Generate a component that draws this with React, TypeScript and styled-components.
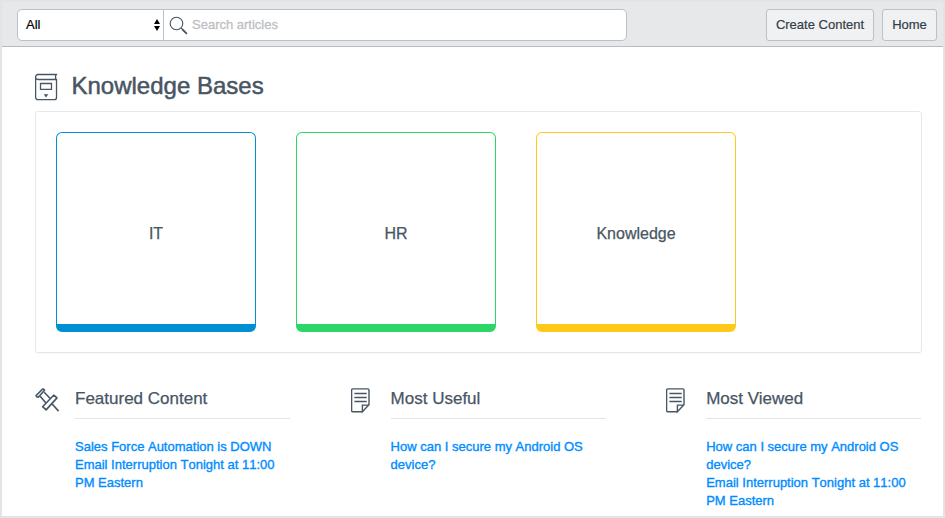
import React from 'react';
import styled, { createGlobalStyle } from 'styled-components';

const GlobalStyle = createGlobalStyle`
  * { box-sizing: border-box; }
  body {
    margin: 0;
    background: #fff;
    color: #485563;
    font-family: "Liberation Sans", Arial, sans-serif;
    -webkit-font-smoothing: antialiased;
  }
`;

const Page = styled.div`
  height: 518px;
  overflow: hidden;
  border: 2px solid #e4e4e4;
  background: #fff;
`;

const Toolbar = styled.header`
  display: flex;
  align-items: flex-start;
  height: 45px;
  padding: 7px 6px 0 15px;
  background: #e6e8ea;
  border-bottom: 1px solid #b8bcc2;
`;

const SearchGroup = styled.div`
  display: flex;
  width: 610px;
  height: 32px;
  margin-right: auto;
  background: #fff;
  border: 1px solid #bdc0c4;
  border-radius: 5px;
  overflow: hidden;
`;

const Scope = styled.div`
  display: flex;
  align-items: center;
  justify-content: space-between;
  width: 146px;
  padding: 0 2px 1px 8px;
  border-right: 1px solid #bdc0c4;
  color: #000;
  font-size: 13px;
  line-height: 28px;
  -webkit-text-stroke: 0.2px #000;
`;

const SearchField = styled.label`
  display: flex;
  flex: 1;
  align-items: center;
  padding: 0 8px 1px 5px;
`;

const SearchInput = styled.input`
  flex: 1;
  height: 28px;
  margin-left: 3px;
  padding: 0;
  border: 0;
  outline: 0;
  background: transparent;
  font: 13px "Liberation Sans", Arial, sans-serif;
  &::placeholder {
    color: #bdc0c4;
    opacity: 1;
    -webkit-text-stroke: 0.3px #bdc0c4;
  }
`;

const ToolButton = styled.button<{ $width: number }>`
  width: ${(p) => p.$width}px;
  height: 32px;
  margin-left: 8px;
  padding: 0 0 1px;
  border: 1px solid #bdc0c4;
  border-radius: 3px;
  background: #f0f1f3;
  color: #343d47;
  font: 13px "Liberation Sans", Arial, sans-serif;
  white-space: nowrap;
  -webkit-text-stroke: 0.2px #343d47;
`;

const Content = styled.main`
  padding: 0 21px 0 33px;
`;

const TitleRow = styled.div`
  display: flex;
  height: 64px;
  padding-top: 25px;
`;

const Title = styled.h1`
  margin: 0 0 0 13.5px;
  font-size: 24px;
  font-weight: 400;
  line-height: 28px;
  -webkit-text-stroke: 0.5px #485563;
`;

const Shelf = styled.section`
  display: flex;
  gap: 40px;
  height: 242px;
  padding: 20px;
  border: 1px solid #e6e8ea;
  border-radius: 3px;
  box-shadow: 0 1px 1px rgba(0, 0, 0, 0.03);
`;

const BaseCard = styled.a<{ $color: string }>`
  display: flex;
  align-items: center;
  justify-content: center;
  width: 200px;
  height: 200px;
  padding-top: 11px;
  border: 1px solid ${(p) => p.$color};
  border-bottom-width: 8px;
  border-radius: 6px;
  font-size: 16px;
  -webkit-text-stroke: 0.25px #485563;
`;

const Lists = styled.div`
  display: grid;
  grid-template-columns: repeat(3, 255px);
  column-gap: 60.6px;
  padding-top: 35px;
`;

const List = styled.section`
  display: flex;
  align-items: flex-start;
`;

const ListIcon = styled.div`
  width: 40px;
  flex: none;
  svg { display: block; }
`;

const ListBody = styled.div`
  width: 215px;
`;

const ListTitle = styled.h2`
  height: 31px;
  margin: 0 0 19px;
  border-bottom: 1px solid #e4e4e4;
  font-size: 17px;
  font-weight: 400;
  line-height: 21px;
  -webkit-text-stroke: 0.25px #485563;
`;

const ArticleLink = styled.a`
  display: block;
  color: #008cff;
  font-size: 13px;
  line-height: 18px;
  font-kerning: none;
  -webkit-text-stroke: 0.35px #008cff;
`;

const Sorter = () => (
  <svg width="8" height="12" viewBox="0 0 8 12" fill="#000">
    <path d="M4 0 7 5H1ZM1 7H7L4 12Z" />
  </svg>
);

const Magnifier = () => (
  <svg width="20" height="20" viewBox="0 0 20 20" fill="none" stroke="#485563">
    <circle cx="7.5" cy="8.5" r="6.3" strokeWidth="1.1" />
    <path d="m12 13 1.3 1.3" />
    <path d="m13 14 4.9 4.9" strokeWidth="1.8" />
  </svg>
);

const Book = () => (
  <svg width="23" height="29" viewBox="0 0 23 29" fill="none" stroke="#485563" strokeWidth="1.3">
    <path d="M22.2 2.5H3.1a2.4 2.4 0 0 0 0 5H21.5V25.5a2.2 2.2 0 0 1-2.2 2.2H2.8A2.2 2.2 0 0 1 .6 25.5V5M20.6 2.5v5" />
    <path d="M5.5 11.5h11v5.8h-11z" />
    <path d="M8.7 22.2h4.6L11 25.5Z" fill="#485563" stroke="none" />
  </svg>
);

const Pin = () => (
  <svg width="26" height="26" viewBox="0 0.5 26 26" fill="none" stroke="#485563" strokeWidth="1.6" strokeLinejoin="round">
    <path d="M7.6 1.6Q8.9 1.2 9.6 2.8L3.3 9.8Q1 9.4 1.1 8Z" />
    <path d="M9.2 4.8 15.2 11M5.2 8.8 10.7 15.2" />
    <path d="M18.7 7.7 22 10.4 11.1 22.4 7.6 19.2ZM16.9 16.2 23.6 23.6" />
  </svg>
);

const Note = () => (
  <svg width="20" height="26" viewBox="0.3 0.7 20 26" fill="none" stroke="#485563" strokeWidth="1.4">
    <path d="M11.7 24.4H2.2A1.3 1.3 0 0 1 .9 23.1V2.9a1.3 1.3 0 0 1 1.3-1.3H17a1.3 1.3 0 0 1 1.3 1.3V17.5L11.7 24.4V17.8H18" />
    <path d="M3.7 6.2H16M3.7 10.2H16M3.7 14.2H16" />
  </svg>
);

const bases = [
  { name: 'IT', color: '#008fd3' },
  { name: 'HR', color: '#2bd566' },
  { name: 'Knowledge', color: '#ffc91a' },
];

const lists = [
  { title: 'Featured Content', icon: <Pin />, articles: ['Sales Force Automation is DOWN', 'Email Interruption Tonight at 11:00 PM Eastern'] },
  { title: 'Most Useful', icon: <Note />, articles: ['How can I secure my Android OS device?'] },
  { title: 'Most Viewed', icon: <Note />, articles: ['How can I secure my Android OS device?', 'Email Interruption Tonight at 11:00 PM Eastern'] },
];

export default function App() {
  return (
    <>
      <GlobalStyle />
      <Page>
        <Toolbar>
          <SearchGroup>
            <Scope>All<Sorter /></Scope>
            <SearchField>
              <Magnifier />
              <SearchInput placeholder="Search articles" />
            </SearchField>
          </SearchGroup>
          <ToolButton $width={108}>Create Content</ToolButton>
          <ToolButton $width={55}>Home</ToolButton>
        </Toolbar>
        <Content>
          <TitleRow>
            <Book />
            <Title>Knowledge Bases</Title>
          </TitleRow>
          <Shelf>
            {bases.map((b) => <BaseCard key={b.name} $color={b.color}>{b.name}</BaseCard>)}
          </Shelf>
          <Lists>
            {lists.map((l) => (
              <List key={l.title}>
                <ListIcon>{l.icon}</ListIcon>
                <ListBody>
                  <ListTitle>{l.title}</ListTitle>
                  {l.articles.map((a) => <ArticleLink key={a}>{a}</ArticleLink>)}
                </ListBody>
              </List>
            ))}
          </Lists>
        </Content>
      </Page>
    </>
  );
}
